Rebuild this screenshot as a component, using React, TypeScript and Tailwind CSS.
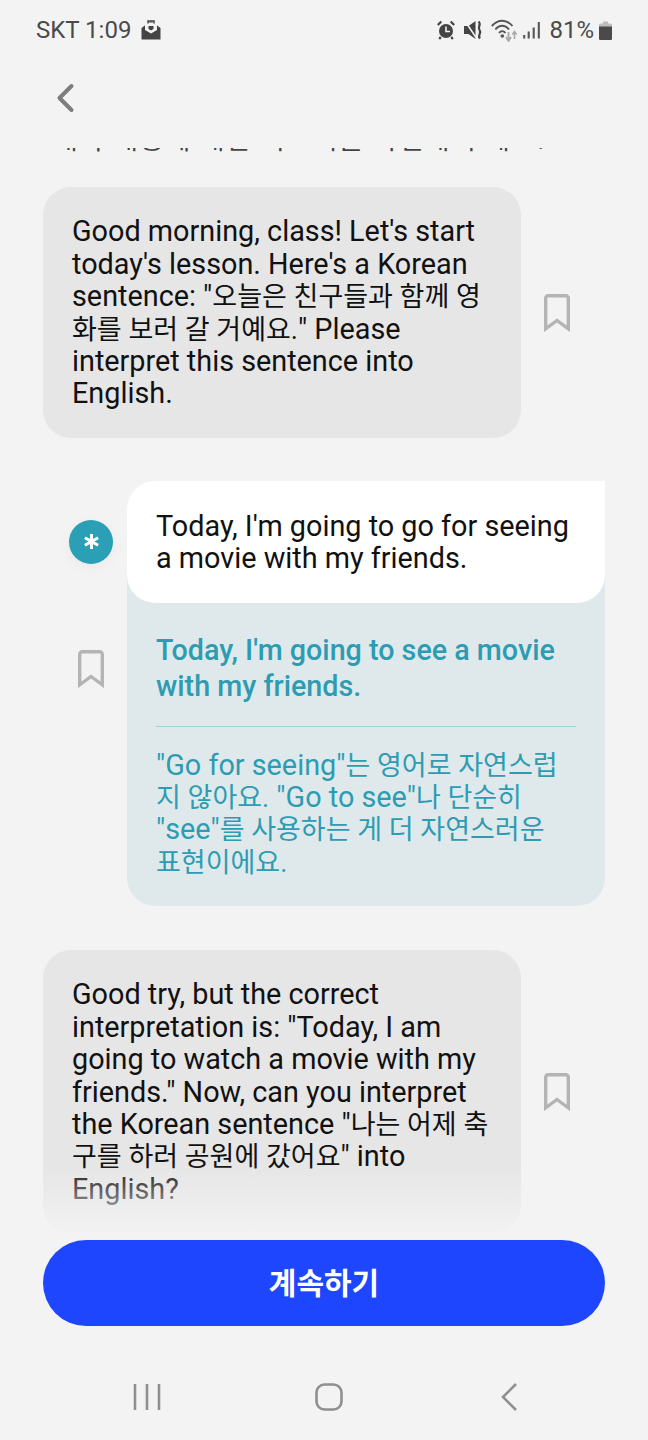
import React from 'react';

// Korean runs sit a little smaller than the Latin text around them
const Ko: React.FC<{ children: React.ReactNode }> = ({ children }) => (
  <span className="text-[27px] leading-none">{children}</span>
);

const Bookmark: React.FC = () => (
  <svg width="26" height="38" viewBox="0 0 26 38" fill="none" aria-hidden="true">
    <path d="M1.700 4.200A2.500 2.500 0 0 1 4.200 1.700H21.800A2.500 2.500 0 0 1 24.300 4.200V34.800L13 26.500 1.700 34.800Z" stroke="#b4b4b4" strokeWidth="3.400" strokeLinejoin="miter" />
  </svg>
);

const StatusIcons: React.FC = () => (
  <div className="flex items-center">
    {/* alarm */}
    <svg width="18" height="20" viewBox="0 0 18 20" className="mr-[9px]" aria-hidden="true">
      <circle cx="9" cy="11" r="7" fill="#444" />
      <path d="M9 6.500V11.500H13" stroke="#f3f3f3" strokeWidth="1.600" fill="none" />
      <path d="M0.800 5L4.300 1.500M17.200 5L13.700 1.500M3.800 17L2.200 19M14.200 17L15.800 19" stroke="#444" strokeWidth="2.200" />
    </svg>
    {/* mute */}
    <svg width="18" height="20" viewBox="0 0 18 20" className="mr-[9px]" aria-hidden="true">
      <path d="M0 6H4.500L11.500 1V19L4.500 14H0Z" fill="#444" />
      <path d="M1 1L13 19" stroke="#f3f3f3" strokeWidth="1.500" />
      <path d="M14.500 1.500C18 4.500 13 7 15.500 10C18 13 13 15.500 16 18.500" stroke="#444" strokeWidth="2.200" fill="none" />
    </svg>
    {/* wifi */}
    <svg width="26" height="24" viewBox="0 0 26 24" className="mr-[6px]" aria-hidden="true">
      <path d="M0.800 8C7 1 15.500 1 21.500 8M4.300 11.500C8.500 6.500 14 6.500 18 11.500M8 15C10 12.500 12.500 12.500 14.500 15" stroke="#555" strokeWidth="1.900" fill="none" />
      <circle cx="11.300" cy="18" r="1.800" fill="#555" />
      <path d="M17.500 14V22M15 19L17.500 23 20 19" stroke="#aaa" strokeWidth="1.900" fill="none" />
      <path d="M23.500 21V14M21.300 16.500L23.500 13.500 25.700 16.500" stroke="#aaa" strokeWidth="1.600" fill="none" />
    </svg>
    {/* signal */}
    <svg width="17" height="18" viewBox="0 0 17 18" className="mr-[9px]" aria-hidden="true">
      <path d="M1.200 17.500V14M5.700 17.500V10.500M10.700 17.500V6.500M15.800 17.500V1" stroke="#555" strokeWidth="2.100" />
    </svg>
    <span className="text-[24px] leading-none text-[#4a4a4a]">81%</span>
    <svg width="13" height="19" viewBox="0 0 13 19" className="ml-[5px]" aria-hidden="true">
      <path d="M4 0.500H9V2.500H11.500A1.500 1.500 0 0 1 13 4V17.500A1.500 1.500 0 0 1 11.500 19H1.500A1.500 1.500 0 0 1 0 17.500V4A1.500 1.500 0 0 1 1.500 2.500H4Z" fill="#bdbdbd" />
      <path d="M0 5.500H13V17.500A1.500 1.500 0 0 1 11.500 19H1.500A1.500 1.500 0 0 1 0 17.500Z" fill="#4a4a4a" />
    </svg>
  </div>
);

const StatusBar: React.FC = () => (
  <div className="h-[60px] shrink-0 flex items-center justify-between px-[36px]">
    <div className="flex items-center gap-[10px]">
      <span className="text-[24px] leading-none text-[#4a4a4a]">SKT 1:09</span>
      <svg width="20" height="20" viewBox="0 0 20 20" aria-hidden="true">
        <path d="M0.500 8L10 1 19.500 8V19.500H0.500Z" fill="#444" />
        <path d="M4 2.500H16V10L10 13.500 4 10Z" fill="#f3f3f3" />
        <path d="M7.500 6H12.500V9L10 10.500 7.500 9Z" fill="#444" />
        <path d="M7 3.500V1H13V3.500" stroke="#444" strokeWidth="1.500" fill="none" />
      </svg>
    </div>
    <StatusIcons />
  </div>
);

const AiBubble: React.FC<{ children: React.ReactNode }> = ({ children }) => (
  <div className="flex items-center gap-[23px] pl-[43px]">
    <div className="w-[478px] rounded-[28px] bg-[#e6e6e6] px-[29px] pt-[28px] pb-[28px] text-[28.800px] leading-[32.400px] text-[#111]">
      {children}
    </div>
    <Bookmark />
  </div>
);

export default function App() {
  return (
    <div
      className="h-[1440px] w-[648px] overflow-hidden flex flex-col bg-[#f3f3f4]"
      style={{ fontFamily: 'Roboto, "Noto Sans CJK KR", sans-serif' }}
    >
      <StatusBar />

      <div className="h-[88px] shrink-0 pl-[54px] pt-[23px]">
        <svg width="24" height="30" viewBox="0 0 24 30" fill="none" aria-hidden="true">
          <path d="M17.500 3L5.500 15 17.500 27" stroke="#7d7d7d" strokeWidth="4" strokeLinecap="round" strokeLinejoin="round" />
        </svg>
      </div>

      <div className="relative h-[1092px] shrink-0 overflow-hidden">
        <div className="-mt-[24px] flex flex-col">
          <p className="pl-[53px] mb-[31px] whitespace-nowrap text-[27px] leading-[32.400px] tracking-[1.300px] text-[#444]">
            대화 내용에 대한 피드백을 확인해 주세요.
          </p>

          <AiBubble>
            Good morning, class! Let's start today's lesson. Here's a Korean sentence: "<Ko>오늘은 친구들과 함께 영화를 보러 갈 거예요.</Ko>" Please interpret this sentence into English.
          </AiBubble>

          <div className="mt-[43px] flex items-start pr-[43px]">
            <div className="w-[127px] shrink-0 flex flex-col items-center pl-[55px]">
              <div className="mt-[39px] h-[44px] w-[44px] rounded-full bg-[#2b9fb5] flex items-center justify-center shadow-[0_4px_14px_rgba(0,0,0,0.04)]">
                <svg width="17" height="17" viewBox="0 0 18 18" aria-hidden="true">
                  <path d="M9 1V17M2 5L16 13M16 5L2 13" stroke="#fff" strokeWidth="3.200" />
                </svg>
              </div>
              <div className="mt-[86px]">
                <Bookmark />
              </div>
            </div>
            <div className="flex-1 rounded-[28px] rounded-tr-none bg-[#dfe9ec]">
              <div className="rounded-[28px] rounded-tr-none bg-white px-[29px] pt-[29px] pb-[28px] text-[28.800px] leading-[32.400px] text-[#111]">
                Today, I'm going to go for seeing a movie with my friends.
              </div>
              <div className="px-[29px] pt-[29px] pb-[28px]">
                <p className="text-[28.700px] font-medium leading-[36px] text-[#2d9cb2]">
                  Today, I'm going to see a movie with my friends.
                </p>
                <div className="my-[22px] h-px bg-[#9fcfd8]" />
                <p className="text-[28.800px] leading-[32.400px] text-[#2d9cb2]">
                  "Go for seeing"<Ko>는 영어로 자연스럽지 않아요.</Ko> "Go to see"<Ko>나 단순히</Ko> "see"<Ko>를 사용하는 게 더 자연스러운 표현이에요.</Ko>
                </p>
              </div>
            </div>
          </div>

          <div className="mt-[44px]">
            <AiBubble>
              Good try, but the correct interpretation is: "Today, I am going to watch a movie with my friends." Now, can you interpret the Korean sentence "<Ko>나는 어제 축구를 하러 공원에 갔어요</Ko>" into English?
            </AiBubble>
          </div>
        </div>
        <div className="absolute left-0 right-0 bottom-0 h-[76px] bg-gradient-to-b from-[#f3f3f4]/0 to-[#f3f3f4]" />
      </div>

      <div className="mx-[43px] h-[86px] shrink-0 rounded-full bg-[#1e46ff] flex items-center justify-center text-[30px] font-bold text-white">
        계속하기
      </div>

      <div className="flex-1 flex items-center justify-between pl-[133px] pr-[130px] pt-[42px] pb-[14px]">
        <svg width="28" height="28" viewBox="0 0 28 28" aria-hidden="true">
          <path d="M2 1V27M14 1V27M26 1V27" stroke="#8f8f8f" strokeWidth="2.600" />
        </svg>
        <svg width="28" height="28" viewBox="0 0 28 28" fill="none" className="-ml-[4px]" aria-hidden="true">
          <rect x="1.500" y="1.500" width="25" height="25" rx="8" stroke="#8f8f8f" strokeWidth="2.600" />
        </svg>
        <svg width="18" height="30" viewBox="0 0 18 30" fill="none" aria-hidden="true">
          <path d="M16 2L3 15 16 28" stroke="#8f8f8f" strokeWidth="2.600" />
        </svg>
      </div>
    </div>
  );
}
